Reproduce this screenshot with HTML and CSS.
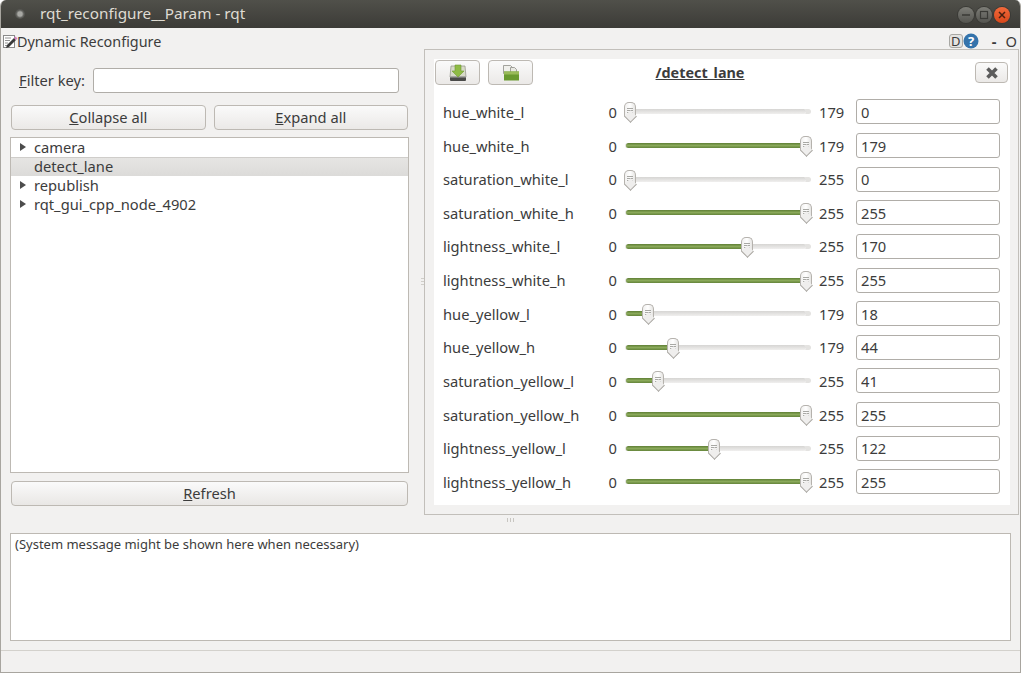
FILE: index.html
```html
<!DOCTYPE html>
<html lang="en">
<head>
    <meta charset="UTF-8">
    <meta name="viewport" content="width=device-width, initial-scale=1.0">
    <title>rqt_reconfigure__Param - rqt</title>
    <link rel="stylesheet" href="styles.css">
</head>
<body>
    <div class="window">
        <header class="titlebar">
            <span class="app-dot"></span>
            <span class="title">rqt_reconfigure__Param - rqt</span>
            <div class="win-buttons">
                <span class="win-btn"><svg width="16" height="16" viewBox="0 0 16 16"><path d="M4 8h8" stroke="#3a3a36" stroke-width="1.4"/></svg></span>
                <span class="win-btn"><svg width="16" height="16" viewBox="0 0 16 16"><rect x="4.500" y="4.500" width="7" height="7" fill="none" stroke="#3a3a36" stroke-width="1.2"/></svg></span>
                <span class="win-btn close"><svg width="16" height="16" viewBox="0 0 16 16"><path d="M5 5l6 6M11 5l-6 6" stroke="#4a2010" stroke-width="1.5"/></svg></span>
            </div>
        </header>

        <div class="pluginbar">
            <svg class="plugin-icon" width="16" height="16" viewBox="0 0 16 16">
                <rect x="1.500" y="2.500" width="11" height="12" fill="#fff" stroke="#8a8a8a"/>
                <path d="M3 5h6M3 7.500h5M3 10h3M3 12.500h4" stroke="#777" stroke-width="0.800"/>
                <path d="M5 12l7-7 2 2-7 7-3 1z" fill="#3a3a3a"/>
                <path d="M12 5l1.500-1.500 2 2L14 7z" fill="#d77fc0"/>
            </svg>
            <span class="plugin-name">Dynamic Reconfigure</span>
            <div class="plugin-tools">
                <span class="tool-d">D</span>
                <svg width="16" height="16" viewBox="0 0 16 16"><circle cx="8" cy="8" r="7.500" fill="#3473ab"/><text x="8" y="12.500" text-anchor="middle" class="help-mark">?</text></svg>
                <span class="tool-dash">-</span>
                <span class="tool-o">O</span>
            </div>
        </div>

        <div class="main">
            <section class="left-pane">
                <div class="filter-row">
                    <label class="filter-label"><u>F</u>ilter key:</label>
                    <input class="text-input filter-input" type="text">
                </div>
                <div class="button-row">
                    <button class="btn"><u>C</u>ollapse all</button>
                    <button class="btn"><u>E</u>xpand all</button>
                </div>
                <ul class="tree">
                    <li class="tree-item has-children">camera</li>
                    <li class="tree-item selected">detect_lane</li>
                    <li class="tree-item has-children">republish</li>
                    <li class="tree-item has-children">rqt_gui_cpp_node_4902</li>
                </ul>
                <button class="btn refresh"><u>R</u>efresh</button>
            </section>

            <div class="v-splitter"><span class="grip-v"></span></div>

            <section class="right-pane">
                <div class="node-panel">
                    <div class="node-head">
                        <button class="btn icon-btn">
                            <svg width="22" height="18" viewBox="0 0 22 18">
                                <path d="M4 2h14l1 11H3z" fill="#d8dbc8" stroke="#9a9a90" stroke-width="0.800"/>
                                <rect x="3" y="12" width="16" height="5" rx="1" fill="#4a4a48"/>
                                <rect x="3" y="12" width="16" height="1.500" fill="#a8a8a4"/>
                                <path d="M8 1h6v6h3l-6 6-6-6h3z" fill="#8fbb45" stroke="#6f9a30" stroke-width="0.600"/>
                            </svg>
                        </button>
                        <button class="btn icon-btn">
                            <svg width="20" height="18" viewBox="0 0 20 18">
                                <path d="M2.500 1.500h7l2 2v6h-9z" fill="#f0f0ec" stroke="#8e8e88" stroke-width="0.800"/>
                                <path d="M9.500 3.500h4l2 2v4h-6z" fill="#e8e8e2" stroke="#8e8e88" stroke-width="0.800"/>
                                <rect x="3" y="7.500" width="15" height="9" fill="#6a9a30"/>
                                <rect x="3" y="7.500" width="15" height="3" fill="#9abb5a"/>
                            </svg>
                        </button>
                        <h2 class="node-title">/detect_lane</h2>
                        <button class="btn icon-btn close-btn">
                            <svg width="16" height="16" viewBox="0 0 16 16"><path d="M3.500 3.500l9 9M12.500 3.500l-9 9" stroke="#5c5c5c" stroke-width="3.600"/></svg>
                        </button>
                    </div>
                    <div class="params">
                        <div class="param"><span class="param-name">hue_white_l</span><span class="range-min">0</span><div class="slider"><div class="fill" style="width:0%"></div><span class="handle" style="left:0%"></span></div><span class="range-max">179</span><input class="text-input value" type="text" value="0"></div>
                        <div class="param"><span class="param-name">hue_white_h</span><span class="range-min">0</span><div class="slider"><div class="fill" style="width:100%"></div><span class="handle" style="left:100%"></span></div><span class="range-max">179</span><input class="text-input value" type="text" value="179"></div>
                        <div class="param"><span class="param-name">saturation_white_l</span><span class="range-min">0</span><div class="slider"><div class="fill" style="width:0%"></div><span class="handle" style="left:0%"></span></div><span class="range-max">255</span><input class="text-input value" type="text" value="0"></div>
                        <div class="param"><span class="param-name">saturation_white_h</span><span class="range-min">0</span><div class="slider"><div class="fill" style="width:100%"></div><span class="handle" style="left:100%"></span></div><span class="range-max">255</span><input class="text-input value" type="text" value="255"></div>
                        <div class="param"><span class="param-name">lightness_white_l</span><span class="range-min">0</span><div class="slider"><div class="fill" style="width:66.7%"></div><span class="handle" style="left:66.7%"></span></div><span class="range-max">255</span><input class="text-input value" type="text" value="170"></div>
                        <div class="param"><span class="param-name">lightness_white_h</span><span class="range-min">0</span><div class="slider"><div class="fill" style="width:100%"></div><span class="handle" style="left:100%"></span></div><span class="range-max">255</span><input class="text-input value" type="text" value="255"></div>
                        <div class="param"><span class="param-name">hue_yellow_l</span><span class="range-min">0</span><div class="slider"><div class="fill" style="width:10.1%"></div><span class="handle" style="left:10.1%"></span></div><span class="range-max">179</span><input class="text-input value" type="text" value="18"></div>
                        <div class="param"><span class="param-name">hue_yellow_h</span><span class="range-min">0</span><div class="slider"><div class="fill" style="width:24.6%"></div><span class="handle" style="left:24.6%"></span></div><span class="range-max">179</span><input class="text-input value" type="text" value="44"></div>
                        <div class="param"><span class="param-name">saturation_yellow_l</span><span class="range-min">0</span><div class="slider"><div class="fill" style="width:16.1%"></div><span class="handle" style="left:16.1%"></span></div><span class="range-max">255</span><input class="text-input value" type="text" value="41"></div>
                        <div class="param"><span class="param-name">saturation_yellow_h</span><span class="range-min">0</span><div class="slider"><div class="fill" style="width:100%"></div><span class="handle" style="left:100%"></span></div><span class="range-max">255</span><input class="text-input value" type="text" value="255"></div>
                        <div class="param"><span class="param-name">lightness_yellow_l</span><span class="range-min">0</span><div class="slider"><div class="fill" style="width:47.8%"></div><span class="handle" style="left:47.8%"></span></div><span class="range-max">255</span><input class="text-input value" type="text" value="122"></div>
                        <div class="param"><span class="param-name">lightness_yellow_h</span><span class="range-min">0</span><div class="slider"><div class="fill" style="width:100%"></div><span class="handle" style="left:100%"></span></div><span class="range-max">255</span><input class="text-input value" type="text" value="255"></div>
                    </div>
                </div>
            </section>
        </div>

        <div class="h-splitter"><span class="grip-h"></span></div>

        <div class="messages">(System message might be shown here when necessary)</div>

        <footer class="statusbar"></footer>
    </div>
</body>
</html>
```

FILE: styles.css
```css
* {
    box-sizing: border-box;
}

body {
    margin: 0;
    background: #fff;
    font-family: "Noto Sans", sans-serif;
    font-size: 14.7px;
    color: #3c3c3c;
}

.window {
    display: flex;
    flex-direction: column;
    width: 1021px;
    height: 673px;
    background: #f2f1f0;
    border: solid #a8a59f;
    border-width: 0 1px 1px;
    border-radius: 6px 6px 0 0;
    overflow: hidden;
}

/* title bar */
.titlebar {
    display: flex;
    align-items: center;
    flex: none;
    height: 28px;
    margin: 0 -1px;
    padding: 0 3px 0 15px;
    background: linear-gradient(#50504a, #3c3b37);
    color: #dfdbd2;
}

.app-dot {
    width: 10px;
    height: 10px;
    border-radius: 50%;
    background: radial-gradient(circle, #a8a8a4 0 30%, #5c5c58 55%, #3f3f3b 100%);
}

.title {
    margin: 0 0 2px 15px;
    font-size: 15.3px;
}

.win-buttons {
    display: flex;
    gap: 2px;
    margin: 2px 8px 0 auto;
}

.win-btn {
    display: flex;
    width: 16px;
    height: 16px;
    align-items: center;
    justify-content: center;
    border-radius: 50%;
    background: linear-gradient(#7d7d77, #54544f);
    box-shadow: 0 0 0 1px #3a3a36;
}

.win-btn svg {
    flex: none;
}

.win-btn.close {
    background: linear-gradient(#f2693a, #d8471a);
}

/* plugin bar */
.pluginbar {
    display: flex;
    align-items: center;
    flex: none;
    height: 21px;
    padding: 4px 3px 0 1px;
}

.plugin-name {
    margin: 2px 0 0 -1px;
    font-size: 14.4px;
}

.plugin-tools {
    display: flex;
    align-items: center;
    margin-left: auto;
}

.tool-d {
    width: 14px;
    height: 14px;
    border: 1px solid #a8a8a4;
    border-radius: 3px;
    background: #e4e3e1;
    font-size: 13px;
    line-height: 12px;
    text-align: center;
}

.help-mark {
    fill: #fff;
    font-size: 13px;
    font-weight: 700;
    font-family: "Noto Sans", sans-serif;
}

.tool-dash {
    margin-left: 13px;
    font-weight: 700;
}

.tool-o {
    margin-left: 9px;
}

/* main split */
.main {
    display: flex;
    flex: none;
    height: 466px;
}

.left-pane {
    display: flex;
    flex-direction: column;
    flex: none;
    width: 423px;
    padding: 19px 15px 9px 9px;
}

.filter-row {
    display: flex;
    align-items: center;
    height: 24px;
    padding: 0 10px 0 9px;
}

.filter-label {
    width: 74px;
    flex: none;
}

.filter-input {
    flex: 1;
    min-width: 0;
}

.button-row {
    display: flex;
    gap: 8px;
    margin: 13px 1px 7px;
}

.btn {
    height: 25px;
    padding: 0 0 2px;
    border: 1px solid #bdb9b3;
    border-radius: 4px;
    background: linear-gradient(#fafafa, #ebe9e7);
    color: #3c3c3c;
    font: inherit;
}

.button-row .btn {
    flex: 1;
}

.tree {
    flex: 1;
    margin: 0;
    padding: 0;
    list-style: none;
    background: #fff;
    border: 1px solid #bdb9b3;
}

.tree-item {
    position: relative;
    height: 19px;
    padding-left: 23px;
    line-height: 19px;
}

.tree-item.selected {
    background: linear-gradient(#e6e5e3, #dcdbd9);
    border-top: 1px solid #cfcdca;
    line-height: 17px;
}

.has-children::before {
    content: "";
    position: absolute;
    left: 9px;
    top: 5px;
    border-left: 6px solid #4c4c4c;
    border-top: 4px solid transparent;
    border-bottom: 4px solid transparent;
}

.refresh {
    flex: none;
    margin: 8px 1px 0;
    height: 25px;
    background: linear-gradient(#fafafa, #e9e7e5);
}

.right-pane {
    flex: none;
    width: 595px;
    height: 466px;
    padding: 9px;
    border: 1px solid #c2bfba;
}

.node-panel {
    height: 446px;
    margin-right: -1px;
    padding: 1px 2px 0 1px;
    background: #fff;
}

.node-head {
    display: flex;
    align-items: center;
    height: 25px;
}

.icon-btn {
    display: flex;
    align-items: center;
    justify-content: center;
    width: 45px;
    height: 25px;
    margin-right: 8px;
    padding: 0;
}

.node-title {
    flex: 1;
    margin: 0;
    padding-right: 116px;
    font-size: 14.4px;
    font-weight: 700;
    text-align: center;
    text-decoration: underline;
}

.close-btn {
    width: 33px;
    height: 21px;
    margin: 0;
}

.params {
    display: grid;
    grid-auto-rows: 25px;
    row-gap: 8.64px;
    margin: 14.4px 0 0 -1px;
}

.param {
    display: flex;
    align-items: center;
}

.param-name {
    flex: none;
    width: 165px;
    padding-left: 9px;
}

.range-min {
    width: 18px;
    text-align: right;
}

.slider {
    position: relative;
    flex: none;
    width: 176px;
    height: 5px;
    margin: 0 13px;
    background: linear-gradient(#d6d5d3, #f0efee);
    border-radius: 3px;
    box-shadow: -5px 0 0 #e4e3e1, 5px 0 0 #e4e3e1;
}

.fill {
    height: 5px;
    margin-left: -4px;
    padding-left: 4px;
    background: linear-gradient(#5f7f35, #8aa95a 50%, #64843a);
    border-radius: 3px;
    box-sizing: content-box;
}

.fill[style="width:0%"] {
    display: none;
}

/* thumb sits over the groove, left comes from the value */
.handle {
    position: absolute;
    top: -7px;
    width: 12px;
    height: 15px;
    margin-left: -6px;
    border: 1px solid #b5b2ad;
    border-bottom: 0;
    border-radius: 5px 5px 0 0;
    background: linear-gradient(90deg, #f1f0ef, #fff 50%, #e6e5e3);
}

.handle::before {
    content: "";
    position: absolute;
    left: 2px;
    top: 5px;
    width: 6px;
    height: 5px;
    background: repeating-linear-gradient(#a8a8a4 0 1px, transparent 1px 2px);
}

.handle::after {
    content: "";
    position: absolute;
    left: 1px;
    bottom: -4px;
    width: 8px;
    height: 8px;
    background: #efeeed;
    border: solid #a9a6a1;
    border-width: 0 1px 1px 0;
    transform: rotate(45deg);
}

.range-max {
    flex: none;
    width: 25px;
}

.text-input {
    height: 25px;
    padding: 0 4px;
    border: 1px solid #b0ada8;
    border-radius: 3px;
    background: #fff;
    color: #3c3c3c;
    font: inherit;
    outline: none;
}

.value {
    flex: none;
    width: 144px;
    margin-left: 12px;
}

/* splitters */
.v-splitter {
    display: flex;
    flex: none;
    width: 0;
    align-items: center;
}

.grip-v {
    width: 3px;
    height: 8px;
    margin-left: -3px;
    background: repeating-linear-gradient(#d0cec9 0 1px, transparent 1px 3px);
}

.h-splitter {
    display: flex;
    flex: none;
    height: 18px;
    justify-content: center;
    padding-top: 3px;
}

.grip-h {
    width: 8px;
    height: 4px;
    background: repeating-linear-gradient(90deg, #c8c6c1 0 1px, transparent 1px 3px);
}

.messages {
    flex: none;
    height: 108px;
    margin: 0 9px;
    padding: 1px 4px;
    background: #fff;
    border: 1px solid #bdb9b3;
    font-size: 13px;
}

.statusbar {
    flex: 1;
    margin-top: 9px;
    border-top: 1px solid #d3d1cc;
}
```
